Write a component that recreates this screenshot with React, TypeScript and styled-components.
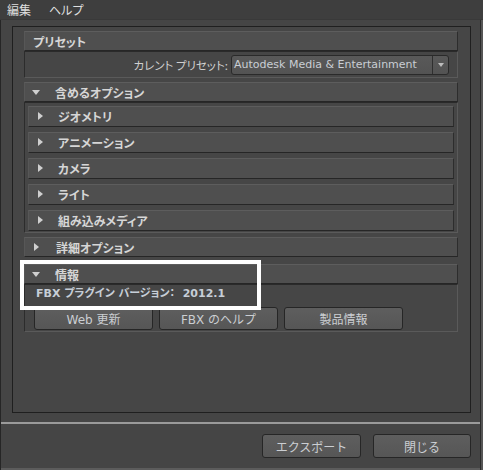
import React from 'react';
import styled, { createGlobalStyle } from 'styled-components';

const JP = `"Noto Sans CJK JP", sans-serif`;
const UI = `"DejaVu Sans", "Noto Sans CJK JP", sans-serif`;

const Global = createGlobalStyle`
  html, body { margin: 0; padding: 0; background: #444; }
  body { width: 483px; height: 470px; overflow: hidden; }
  * { box-sizing: border-box; }
`;

const Window = styled.div`
  position: relative;
  width: 483px;
  height: 470px;
  background: #555;
  display: flex;
  flex-direction: column;
  font-family: ${JP};
  font-feature-settings: "palt";
  color: #d0d0d0;
`;

const MenuBar = styled.div`
  height: 20px;
  flex: none;
  background: #3e3e3e;
  display: flex;
  align-items: center;
  padding-left: 7px;
  gap: 18px;
  font-size: 12px;
  color: #dedede;
  border-bottom: 1px solid #393939;
`;

const MenuItem = styled.span`
  line-height: 1;
`;

const Frame = styled.div`
  flex: 1;
  display: flex;
  flex-direction: column;
  margin-right: 2px;
  border-left: 1px solid #262626;
  border-right: 1px solid #2b2b2b;
  background: #454545;
`;

const Main = styled.div`
  flex: 1;
  display: flex;
  padding: 6px 9px 9px 11px;
`;

const Panel = styled.div`
  flex: 1;
  display: flex;
  flex-direction: column;
  border: 1px solid #1f1f1f;
  background: #464646;
  padding: 4px 12px 4px 11px;
`;

const Header = styled.div<{ $indent: number; $mt?: number }>`
  height: 20px;
  flex: none;
  display: flex;
  align-items: center;
  padding-left: ${p => p.$indent}px;
  margin-top: ${p => p.$mt ?? 0}px;
  background: #4f4f4f;
  border-top: 1px solid #5d5d5d;
  border-left: 1px solid #575757;
  border-bottom: 1px solid #262626;
  border-right: 1px solid #2d2d2d;
  font-size: 12px;
  font-weight: 700;
  color: #d6d6d6;
`;

const SubHeader = styled(Header)`
  height: 21px;
`;

const Arrow = styled.span<{ $dir: 'down' | 'right' }>`
  width: 9px;
  height: 9px;
  flex: none;
  position: relative;
  margin-right: 14px;
  &::before {
    content: '';
    position: absolute;
    ${p =>
      p.$dir === 'down'
        ? `left: 0; top: 2px; border-left: 4.5px solid transparent; border-right: 4.5px solid transparent; border-top: 5px solid #cfcfcf;`
        : `left: 1px; top: 0; border-top: 4px solid transparent; border-bottom: 4px solid transparent; border-left: 5px solid #cfcfcf;`}
  }
`;

const SubArrow = styled(Arrow)`
  margin-right: 12px;
`;

const Body = styled.div<{ $h: number; $mb?: number }>`
  height: ${p => p.$h}px;
  flex: none;
  margin-bottom: ${p => p.$mb ?? 0}px;
  border-top: 1px solid #2a2a2a;
  border-left: 1px solid #2c2c2c;
  border-bottom: 1px solid #5a5a5a;
  border-right: 1px solid #5a5a5a;
`;

const PresetBody = styled(Body)`
  display: flex;
  align-items: center;
  justify-content: flex-end;
  gap: 3px;
  padding-right: 8px;
`;

const PresetLabel = styled.span`
  font-size: 11.5px;
  color: #cfcfcf;
`;

const Dropdown = styled.div`
  width: 218px;
  height: 20px;
  display: flex;
  border: 1px solid #2a2a2a;
  border-radius: 3px;
  background: linear-gradient(#595959, #535353);
  overflow: hidden;
`;

const DropText = styled.span`
  flex: 1;
  padding-left: 2px;
  font-family: ${UI};
  font-size: 11px;
  line-height: 18px;
  color: #c9ced4;
  white-space: nowrap;
`;

const DropButton = styled.span`
  width: 16px;
  flex: none;
  border-left: 1px solid #2f2f2f;
  display: flex;
  align-items: center;
  justify-content: center;
  &::before {
    content: '';
    border-left: 3.5px solid transparent;
    border-right: 3.5px solid transparent;
    border-top: 4px solid #bdbdbd;
  }
`;

const GroupBody = styled(Body)`
  display: flex;
  flex-direction: column;
  gap: 5px;
  padding: 3px 3px 0 3px;
`;

const InfoBody = styled(Body)`
  display: flex;
  flex-direction: column;
  padding: 2px 0 0 9px;
`;

const InfoText = styled.div`
  height: 14px;
  padding-left: 2px;
  font-family: ${UI};
  font-size: 11px;
  font-weight: 700;
  line-height: 14px;
  color: #c6ced7;
  white-space: pre;
`;

const ButtonRow = styled.div<{ $gap: number }>`
  display: flex;
  gap: ${p => p.$gap}px;
`;

const InfoRow = styled(ButtonRow)`
  margin-top: 6px;
`;

const Button = styled.button<{ $w: number; $h: number }>`
  width: ${p => p.$w}px;
  height: ${p => p.$h}px;
  padding: 0;
  border: 1px solid #262626;
  border-radius: 3px;
  background: linear-gradient(#5e5e5e, #565656);
  font-family: ${UI};
  font-size: 12px;
  color: #cbced2;
  display: flex;
  align-items: center;
  justify-content: center;
`;

const Footer = styled.div`
  height: 48px;
  flex: none;
  display: flex;
  align-items: center;
  justify-content: flex-end;
  gap: 12px;
  padding-right: 9px;
  border-top: 2px solid #9a9a9a;
  border-bottom: 2px solid #5c5c5c;
`;

const Highlight = styled.div`
  position: absolute;
  left: 20px;
  top: 260px;
  width: 241px;
  height: 50px;
  border: 4px solid #ffffff;
  pointer-events: none;
`;

const subItems = ['ジオメトリ', 'アニメーション', 'カメラ', 'ライト', '組み込みメディア'];
const infoButtons = ['Web 更新', 'FBX のヘルプ', '製品情報'];

export default function App() {
  return (
    <>
      <Global />
      <Window>
        <MenuBar>
          <MenuItem>編集</MenuItem>
          <MenuItem>ヘルプ</MenuItem>
        </MenuBar>
        <Frame>
          <Main>
            <Panel>
              <Header $indent={8}>プリセット</Header>
              <PresetBody $h={27} $mb={4}>
                <PresetLabel>カレント プリセット:</PresetLabel>
                <Dropdown>
                  <DropText>Autodesk Media &amp; Entertainment</DropText>
                  <DropButton />
                </Dropdown>
              </PresetBody>

              <Header $indent={7}>
                <Arrow $dir="down" />
                含めるオプション
              </Header>
              <GroupBody $h={131} $mb={4}>
                {subItems.map(s => (
                  <SubHeader key={s} $indent={8}>
                    <SubArrow $dir="right" />
                    {s}
                  </SubHeader>
                ))}
              </GroupBody>

              <Header $indent={8}>
                <Arrow $dir="right" />
                詳細オプション
              </Header>

              <Header $indent={7} $mt={7}>
                <Arrow $dir="down" />
                情報
              </Header>
              <InfoBody $h={48}>
                <InfoText>{'FBX プラグイン バージョン：  2012.1'}</InfoText>
                <InfoRow $gap={6}>
                  {infoButtons.map(b => (
                    <Button key={b} $w={119} $h={23}>
                      {b}
                    </Button>
                  ))}
                </InfoRow>
              </InfoBody>
            </Panel>
          </Main>
          <Footer>
            <Button $w={99} $h={24}>エクスポート</Button>
            <Button $w={98} $h={24}>閉じる</Button>
          </Footer>
        </Frame>
        <Highlight />
      </Window>
    </>
  );
}
